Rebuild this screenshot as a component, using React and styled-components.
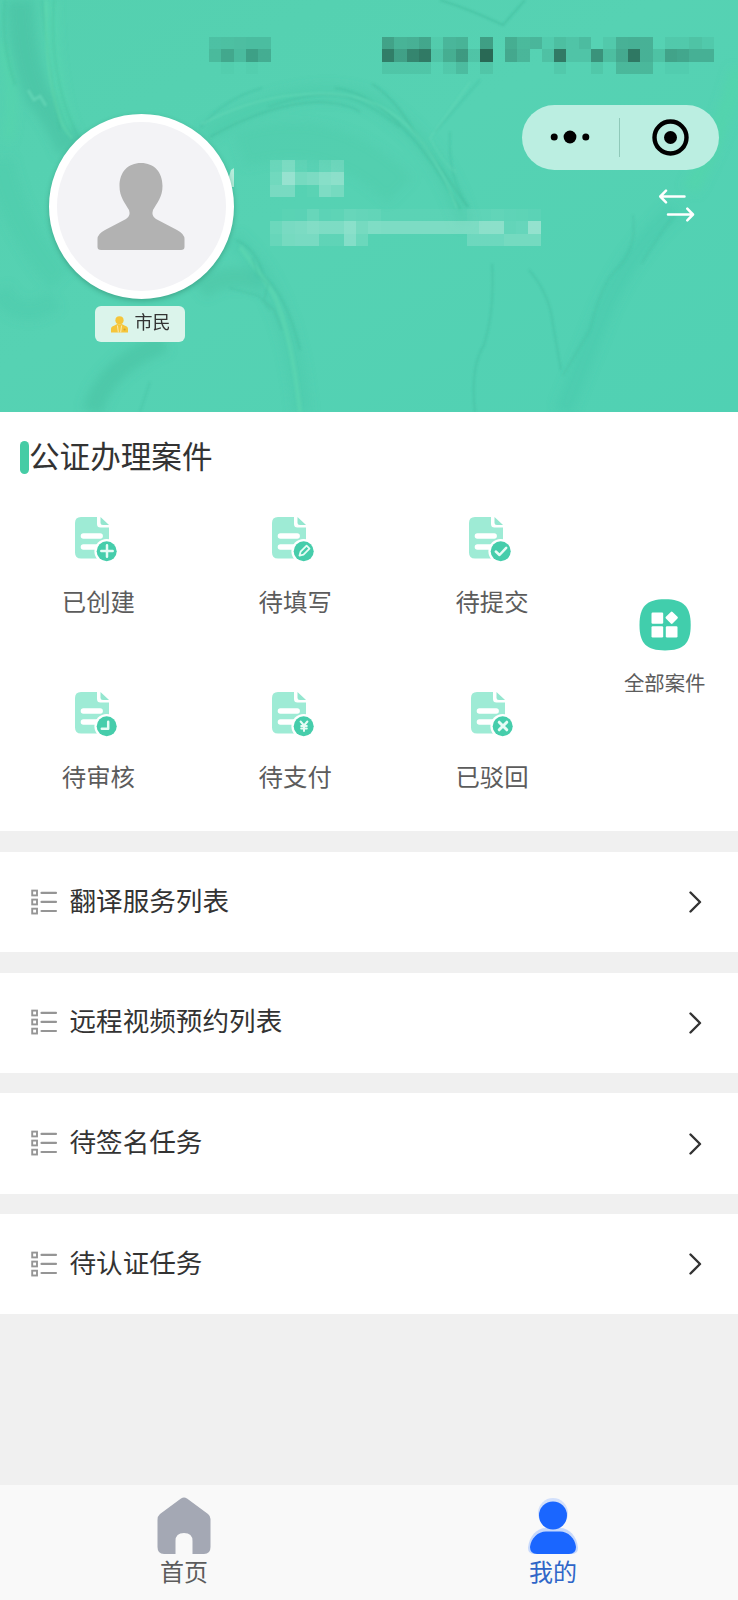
import React from "react";
import styled, { createGlobalStyle } from "styled-components";

const GlobalStyle = createGlobalStyle`
  * { box-sizing: border-box; }
  body {
    margin: 0;
    background: #f0f0f0;
    font-family: "Noto Sans CJK SC", "Noto Sans", sans-serif;
    color: #333;
  }
  svg { display: block; flex: none; }
`;

const Page = styled.div`
  width: 738px;
  height: 1600px;
  display: flex;
  flex-direction: column;
  background: #f0f0f0;
  overflow: hidden;
`;

/* ---------- header ---------- */

const Hero = styled.header`
  position: relative;
  flex: none;
  height: 412px;
  padding-top: 37px;
  background: #55d1b2;
  overflow: hidden;
`;

const Backdrop = styled.svg`
  position: absolute;
  inset: 0;
`;

const StatusBar = styled.div`
  position: relative;
  display: flex;
  justify-content: space-between;
  height: 37px;
  padding: 0 24px 0 209px;
`;

const HeroBody = styled.div`
  position: relative;
  display: flex;
  padding-left: 49px;
`;

const AvatarColumn = styled.div`
  display: flex;
  flex-direction: column;
  align-items: center;
  width: 185px;
  padding-top: 40px;
`;

const Avatar = styled.div`
  display: flex;
  justify-content: center;
  width: 185px;
  height: 185px;
  padding: 41px 1px 0 0;
  border: 8px solid #fff;
  border-radius: 50%;
  background: #f3f3f6;
  box-shadow: 0 2px 5px rgba(30, 110, 85, 0.4);
`;

const RoleTag = styled.div`
  display: flex;
  align-items: center;
  gap: 7px;
  width: 90px;
  height: 36px;
  margin: 7px 4px 0 0;
  padding-left: 16px;
  border-radius: 6px;
  background: #dbf4eb;
  font-size: 18px;
  line-height: 31px;
`;

const RoleName = styled.span`
  height: 36px;
`;

const Identity = styled.div`
  flex: none;
  display: flex;
  flex-direction: column;
  gap: 12px;
  width: 252px;
  margin-left: 36px;
  padding-top: 86px;
`;

const HeroActions = styled.div`
  position: relative;
  display: flex;
  flex-direction: column;
  align-items: flex-end;
  gap: 18px;
  padding-top: 31px;
`;

const Capsule = styled.div`
  display: flex;
  align-items: center;
  width: 197px;
  height: 64.5px;
  border-radius: 33px;
  background: #bbeee1;
`;

const CapsuleButton = styled.button`
  flex: 1;
  display: flex;
  justify-content: center;
  align-items: center;
  height: 100%;
  padding: 0 0 0 ${(p) => p.$inset || 0}px;
  border: 0;
  background: none;
`;

const CapsuleDivider = styled.i`
  width: 1px;
  height: 39px;
  background: #8fc9b9;
`;

const SwapButton = styled.button`
  margin: 0 24px 0 0;
  padding: 0;
  border: 0;
  background: none;
`;

/* ---------- cases ---------- */

const CasePanel = styled.section`
  flex: none;
  height: 419px;
  background: #fff;
`;

const PanelTitle = styled.h2`
  display: flex;
  align-items: center;
  height: 90px;
  margin: 0;
  padding-left: 20px;
  font-size: 30.6px;
  font-weight: 400;
  line-height: 44px;
`;

const TitleText = styled.span`
  padding-bottom: 5px;
`;

const TitleBar = styled.i`
  width: 9px;
  height: 33px;
  border-radius: 5px;
  background: #45cca5;
`;

const CaseArea = styled.div`
  display: flex;
`;

const CaseGrid = styled.div`
  display: grid;
  grid-template-columns: repeat(3, 196.8px);
  grid-auto-rows: 175px;
`;

const CaseItem = styled.div`
  display: flex;
  flex-direction: column;
  align-items: center;
  padding-top: 14.5px;
  font-size: 24.4px;
  line-height: 36px;
  color: #5c5c5c;
`;

const CaseIcon = styled.svg`
  margin: 0 ${(p) => p.$space}px 21.5px 0;
`;

const AllCases = styled.div`
  flex: 1;
  display: flex;
  flex-direction: column;
  align-items: center;
  gap: 16px;
  padding: 97px 0 0 1px;
  font-size: 20.4px;
  line-height: 30px;
  color: #5c5c5c;
`;

/* ---------- menu ---------- */

const Menu = styled.nav`
  display: flex;
  flex-direction: column;
  gap: 20.4px;
  padding-top: 21px;
`;

const MenuRow = styled.a`
  display: flex;
  align-items: center;
  height: 100.3px;
  padding: 0 36px 0 31px;
  background: #fff;
  font-size: 26.6px;
  line-height: 40px;
`;

const MenuText = styled.span`
  flex: 1;
  padding: 0 0 5px 11.5px;
`;

/* ---------- tab bar ---------- */

const TabBar = styled.footer`
  display: flex;
  height: 115px;
  margin-top: auto;
  background: #f9f9f9;
`;

const Tab = styled.a`
  flex: 1;
  display: flex;
  flex-direction: column;
  align-items: center;
  padding: 11.5px 1px 0 0;
  font-size: 24px;
  line-height: 32px;
  color: ${(p) => (p.$active ? "#2f66c8" : "#5c5c5c")};
`;

/* ---------- drawings ---------- */

const CELL = 12.3;

function Mosaic({ rows, color }) {
  const width = rows[0].length * CELL;
  return (
    <svg width={width} height={37} viewBox={`0 0 ${width} 37`} shapeRendering="crispEdges">
      {rows.map((row, y) =>
        row.map((a, x) =>
          a ? (
            <rect key={`${x}-${y}`} x={x * CELL} y={y * CELL} width={CELL} height={CELL} fill={color} opacity={a / 100} />
          ) : null
        )
      )}
    </svg>
  );
}

const CLOCK = [
  [18, 20, 21, 23, 23],
  [28, 48, 25, 58, 42],
  [0, 3, 0, 3, 0],
];
const STATUS = [
  [42, 27, 29, 38, 5, 24, 27, 0, 46, 0, 32, 22, 24, 6, 17, 12, 19, 0, 8, 29, 30, 29, 0, 8, 8, 13, 8],
  [75, 44, 68, 78, 12, 32, 50, 12, 94, 0, 37, 25, 0, 15, 78, 12, 12, 56, 18, 36, 80, 29, 14, 42, 38, 30, 30],
  [11, 11, 11, 11, 0, 8, 19, 0, 10, 0, 0, 0, 0, 0, 8, 0, 0, 9, 0, 23, 23, 23, 0, 4, 4, 0, 0],
];
const NAME = [
  [17, 30, 8, 4, 13, 20],
  [22, 52, 26, 30, 40, 44],
  [28, 28, 0, 3, 32, 26],
];
const ID_NUMBER = [
  [0, 3, 4, 14, 6, 7, 14, 12, 10, 5, 5, 5, 5, 5, 5, 5, 8, 8, 10, 8, 7, 6],
  [18, 28, 30, 36, 32, 32, 42, 26, 33, 32, 32, 32, 32, 32, 32, 32, 32, 44, 44, 12, 15, 50],
  [14, 26, 28, 28, 8, 8, 38, 18, 0, 0, 0, 0, 0, 0, 0, 0, 20, 20, 20, 26, 26, 26],
];

function MarbleBackdrop() {
  return (
    <Backdrop width="738" height="412" viewBox="0 0 738 412" fill="none">
      <defs>
        <linearGradient id="marble" x1="0" y1="0" x2="1" y2="1">
          <stop offset="0" stopColor="#54d0af" />
          <stop offset=".45" stopColor="#56d2b3" />
          <stop offset="1" stopColor="#50d1b3" />
        </linearGradient>
        <filter id="soft" x="-20%" y="-20%" width="140%" height="140%">
          <feGaussianBlur stdDeviation="5" />
        </filter>
        <filter id="fine" x="-20%" y="-20%" width="140%" height="140%">
          <feGaussianBlur stdDeviation="1" />
        </filter>
      </defs>
      <rect width="738" height="412" fill="url(#marble)" />
      <g filter="url(#soft)">
        <path d="M20 0 Q22 60 38 96 Q56 115 70 150" stroke="#48c2a3" strokeWidth="26" opacity=".65" />
        <path d="M0 45 Q18 85 8 140" stroke="#55daa9" strokeWidth="8" opacity=".5" />
        <path d="M52 0 Q52 80 70 130" stroke="#5adcb0" strokeWidth="8" opacity=".6" />
        <path d="M0 160 Q15 230 60 280" stroke="#4bc8a8" strokeWidth="26" opacity=".35" />
        <path d="M92 412 Q105 365 165 342" stroke="#4ac3a3" strokeWidth="20" opacity=".6" />
        <path d="M200 290 Q225 270 262 282" stroke="#4ac3a3" strokeWidth="20" opacity=".5" />
        <path d="M205 135 Q300 75 370 100 Q440 140 465 225" stroke="#4ac9a9" strokeWidth="16" opacity=".45" />
        <path d="M240 150 Q330 120 400 190" stroke="#4fcbab" strokeWidth="36" opacity=".5" />
        <path d="M233 239 Q290 290 302 412" stroke="#4cc9aa" strokeWidth="18" opacity=".4" />
        <path d="M675 210 Q630 250 604 310 L563 412" stroke="#46c7aa" strokeWidth="18" opacity=".45" />
        <path d="M738 70 Q715 150 690 190" stroke="#51d7a7" strokeWidth="16" opacity=".5" />
        <path d="M0 290 Q20 325 55 300" stroke="#4cc9aa" strokeWidth="20" opacity=".4" />
      </g>
      <g filter="url(#fine)" strokeWidth="1.6">
        <path d="M5 0 Q0 40 15 85 M42 0 Q48 65 60 130 M54 0 Q48 80 80 140" stroke="#40b795" opacity=".35" />
        <path d="M28 90 L34 100 40 96 46 106" stroke="#74dfc0" strokeWidth="3" opacity=".5" />
        <path d="M46 0 Q45 70 58 112 Q62 128 72 138" stroke="#68deaf" strokeWidth="2.5" opacity=".4" />
        <path d="M200 128 Q225 98 262 88 M268 107 Q315 90 345 96 Q370 104 400 127" stroke="#42ba9a" opacity=".4" />
        <path d="M210 137 Q270 103 320 102 Q350 104 360 112" stroke="#3eb696" opacity=".45" />
        <path d="M335 88 Q370 92 405 130 Q430 155 460 209 M372 84 Q395 98 414 132 Q440 165 467 207" stroke="#3eb696" opacity=".45" />
        <path d="M202 124 Q250 99 295 95 Q355 88 390 112 Q430 137 457 208" stroke="#70dfbd" opacity=".45" />
        <path d="M440 0 Q469 9 503 25 L525 0" stroke="#39b394" opacity=".5" />
        <path d="M480 80 L435 132 M450 132 Q447 178 469 207" stroke="#39b394" opacity=".3" />
        <path d="M470 82 L430 138 Q444 165 456 172" stroke="#70dfbd" opacity=".35" />
        <path d="M236 240 Q257 249 263 275 Q287 296 300 350" stroke="#3eb697" opacity=".4" />
        <path d="M240 247 Q258 270 274 295 Q291 332 300 412" stroke="#62dcb1" strokeWidth="4.5" opacity=".45" />
        <path d="M252 258 L258 275 268 285 264 300 274 310 282 330" stroke="#43b99a" opacity=".4" />
        <path d="M230 288 L259 296 270 310 M150 382 L140 412" stroke="#43b99a" opacity=".35" />
        <path d="M492 264 Q495 310 484 345 Q470 367 475 412" stroke="#3db595" opacity=".4" />
        <path d="M529 270 Q550 294 553 325 L561 370" stroke="#3db595" opacity=".4" />
        <path d="M633 215 Q638 250 614 272 Q600 288 590 330 L563 375 M675 215 Q655 240 642 263" stroke="#3fb798" opacity=".3" />
      </g>
      <path d="M228 180 L231 170 L234 168 V187 H231Z" fill="#b5eddb" />
    </Backdrop>
  );
}

const badgeMarks = {
  plus: <path d="M32 28.3V39.7M26.3 34H37.7" />,
  edit: <path d="M27.5 38.6 28.6 34.7 34.6 28.7 37.5 31.6 31.5 37.6Z" strokeWidth="1.8" />,
  check: <path d="M26.8 34.5 30.5 38 37.2 30.8" />,
  clock: <path d="M33.2 29.8V36.8H26.8" />,
  yen: <path d="M28.6 29.5 32 33.5 35.4 29.5M32 33.5V39M29.2 34H34.8M29.2 36.5H34.8" strokeWidth="2" />,
  cross: <path d="M28.2 30.2 35.8 37.8M35.8 30.2 28.2 37.8" strokeWidth="3" />,
};

function CaseDocument({ mark, space }) {
  return (
    <CaseIcon $space={space} width="43" height="45" viewBox="0 0 43 45" fill="none">
      <path d="M6 0H22V7Q22 10.5 25.5 10.5H34V36Q34 41.5 28.5 41.5H6Q0 41.5 0 35.5V6Q0 0 6 0Z" fill="#9eebd5" />
      <path d="M25.5 0 34 8H28Q25.5 8 25.5 5.5Z" fill="#94e6cf" />
      <path d="M8.4 19H25.2M8.4 30H25" stroke="#fff" strokeWidth="5.4" strokeLinecap="round" />
      <circle cx="31.7" cy="34.2" r="12.3" fill="#fff" />
      <circle cx="31.7" cy="34.2" r="10" fill="#46cdab" />
      <g stroke="#e6fcf5" strokeWidth="2.5" strokeLinecap="round" strokeLinejoin="round">{badgeMarks[mark]}</g>
    </CaseIcon>
  );
}

const cases = [
  ["已创建", "plus", 4],
  ["待填写", "edit", 4],
  ["待提交", "check", 2.5],
  ["待审核", "clock", 4],
  ["待支付", "yen", 4],
  ["已驳回", "cross", -2],
];

const menuRows = ["翻译服务列表", "远程视频预约列表", "待签名任务", "待认证任务"];

function ListIcon() {
  return (
    <svg width="27" height="27" viewBox="0 0 27 27" fill="none" stroke="#959595" strokeWidth="1.9">
      {[1.6, 10.6, 19.7].map((y) => (
        <g key={y}>
          <rect x="1.2" y={y} width="4.8" height="4.8" />
          <path d={`M10.5 ${y + 2.3}H25`} strokeWidth="2.1" strokeLinecap="round" />
        </g>
      ))}
    </svg>
  );
}

export default function App() {
  return (
    <Page>
      <GlobalStyle />
      <Hero>
        <MarbleBackdrop />
        <StatusBar>
          <Mosaic rows={CLOCK} color="#2d7c67" />
          <Mosaic rows={STATUS} color="#26624f" />
        </StatusBar>
        <HeroBody>
          <AvatarColumn>
            <Avatar>
              <svg width="88" height="88" viewBox="0 0 88 88">
                <path d="M44 0C57 0 65.5 9 65.5 23C65.5 34 60 40 56 47Q54 53 59 56L80 67Q87.5 71 87.5 76V84Q87.5 87 84 87H4Q.5 87 .5 84V76Q.5 71 8 67L29 56Q34 53 32 47C28 40 22.5 34 22.5 23C22.5 9 31 0 44 0Z" fill="#b2b2b2" />
              </svg>
            </Avatar>
            <RoleTag>
              <svg width="17" height="17" viewBox="0 0 17 17">
                <circle cx="8.5" cy="4.3" r="4.1" fill="#f5c53b" />
                <path d="M0 16.5V13Q0 10.5 3 9.8L6.2 8 8.5 8.5 10.8 8 14 9.8Q17 10.5 17 13V16.5Z" fill="#f5c53b" />
                <path d="M6.4 9.5 7.4 16.5M10.6 9.5 9.6 16.5" stroke="#fbe9ac" strokeWidth="1.1" />
                <circle cx="13.6" cy="13.5" r="1.1" fill="#d3a531" />
              </svg>
              <RoleName>市民</RoleName>
            </RoleTag>
          </AvatarColumn>
          <Identity>
            <Mosaic rows={NAME} color="#d3f2e9" />
            <Mosaic rows={ID_NUMBER} color="#d3f2e9" />
          </Identity>
          <HeroActions>
            <Capsule>
              <CapsuleButton aria-label="更多">
                <svg width="40" height="14" viewBox="0 0 40 14">
                  <circle cx="4.2" cy="7" r="3.5" />
                  <circle cx="20" cy="7" r="6.4" />
                  <circle cx="35.8" cy="7" r="3.5" />
                </svg>
              </CapsuleButton>
              <CapsuleDivider />
              <CapsuleButton aria-label="关闭" $inset={3}>
                <svg width="37" height="37" viewBox="0 0 37 37">
                  <circle cx="18.5" cy="18.5" r="16" fill="none" stroke="#000" strokeWidth="4.4" />
                  <circle cx="18.5" cy="18.5" r="6.5" />
                </svg>
              </CapsuleButton>
            </Capsule>
            <SwapButton aria-label="切换">
              <svg width="36" height="34" viewBox="0 0 36 34" fill="none" stroke="#fff" strokeWidth="2.5" strokeLinecap="round" strokeLinejoin="round">
                <path d="M25.5 8.5H1.5M7 2.7 1.3 8.5 7 14.3" />
                <path d="M9 26.5H33.8M28.3 20.7 34 26.5 28.3 32.3" />
              </svg>
            </SwapButton>
          </HeroActions>
        </HeroBody>
      </Hero>

      <CasePanel>
        <PanelTitle>
          <TitleBar />
          <TitleText>公证办理案件</TitleText>
        </PanelTitle>
        <CaseArea>
          <CaseGrid>
            {cases.map(([label, mark, space]) => (
              <CaseItem key={label}>
                <CaseDocument mark={mark} space={space} />
                {label}
              </CaseItem>
            ))}
          </CaseGrid>
          <AllCases>
            <svg width="52" height="52" viewBox="0 0 52 52">
              <path d="M26 .3C44.5 .3 51.7 7.5 51.7 26S44.5 51.4 26 51.4 .5 44.5 .5 26 7.5 .3 26 .3Z" fill="#41ceac" />
              <g fill="#fff">
                <rect x="12.5" y="13.5" width="11.7" height="11.2" rx="1.2" />
                <rect x="12.5" y="27.3" width="11.7" height="11.2" rx="1.2" />
                <rect x="26.8" y="27.3" width="11.7" height="11.2" rx="1.2" />
                <rect x="28" y="14" width="9.4" height="9.4" rx="1.2" transform="rotate(45 32.7 18.7)" />
              </g>
            </svg>
            全部案件
          </AllCases>
        </CaseArea>
      </CasePanel>

      <Menu>
        {menuRows.map((label) => (
          <MenuRow key={label}>
            <ListIcon />
            <MenuText>{label}</MenuText>
            <svg width="14" height="22" viewBox="0 0 14 22" fill="none" stroke="#333" strokeWidth="2.4" strokeLinecap="round" strokeLinejoin="round">
              <path d="M2.5 1.5 12 11 2.5 20.5" />
            </svg>
          </MenuRow>
        ))}
      </Menu>

      <TabBar>
        <Tab>
          <svg width="54" height="58" viewBox="0 0 54 58">
            <path d="M24 1.5Q27 -.5 30 1.5L51 17Q53.5 19 53.5 22V50Q53.5 57 47 57H35.5V44Q35.5 36 27 36T18.5 44V57H7Q.5 57 .5 50V23Q.5 19 3 17Z" fill="#a4a8b4" />
          </svg>
          首页
        </Tab>
        <Tab $active>
          <svg width="50" height="58" viewBox="0 0 50 58">
            <circle cx="25" cy="16" r="15" fill="#d3e0fb" />
            <path d="M0 51C1 39 9 31 18 31H32C41 31 49 39 50 51Q50 57 43 57H7Q0 57 0 51Z" fill="#c6d8fc" />
            <circle cx="25" cy="18.5" r="14" fill="#1a66ff" />
            <path d="M2 50C3 41 10 34.5 18 34.5H32C40 34.5 47 41 48 50Q48 57 41 57H9Q2 57 2 50Z" fill="#1a66ff" />
          </svg>
          我的
        </Tab>
      </TabBar>
    </Page>
  );
}
